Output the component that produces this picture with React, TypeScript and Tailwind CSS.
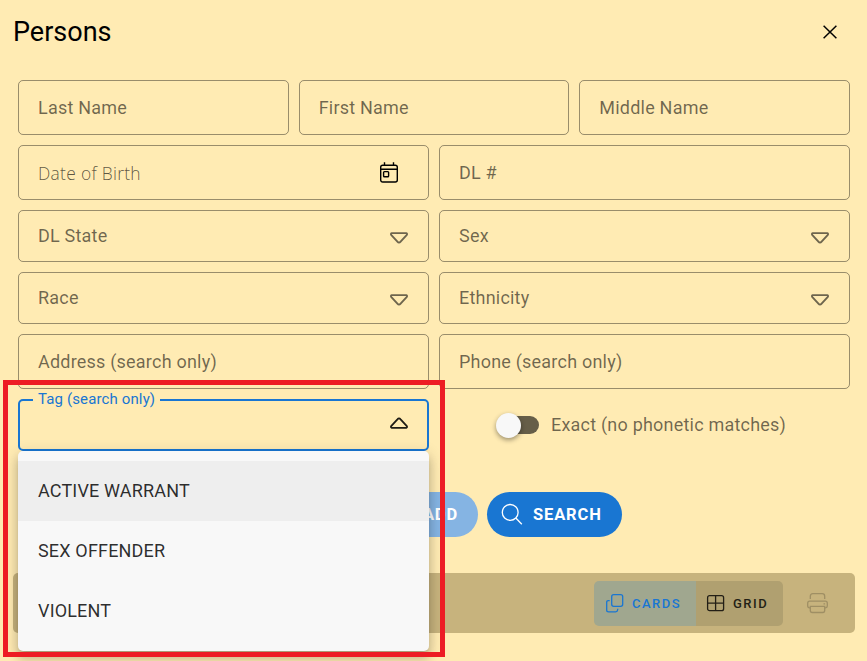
import React from "react";

const fieldBase =
  "flex items-center justify-between rounded-[5px] border border-black/40 pl-[19px] text-[18px] leading-[24px] tracking-[0.21px] text-black/57";

function TextField({ label }: { label: string }) {
  return (
    <div className={`${fieldBase} h-[55px]`}>
      <span>{label}</span>
    </div>
  );
}

function SelectField({ label }: { label: string }) {
  return (
    <div className={`${fieldBase} h-[52px] pr-5`}>
      <span>{label}</span>
      <svg width="18" height="12" viewBox="0 0 18 12" fill="none" stroke="currentColor" strokeWidth="1.9" strokeLinejoin="round" className="mt-[3px]">
        <path d="M1.8 1.1H16.2Q17.7 1.7 16.6 3.1L10.6 9.6Q9 11.6 7.4 9.6L1.4 3.1Q.3 1.7 1.8 1.1Z" />
      </svg>
    </div>
  );
}

function DateField({ label }: { label: string }) {
  return (
    <div className={`${fieldBase} h-[55px] pr-[29px]`}>
      <span className="font-['Open_Sans',sans-serif] text-[17.4px] font-[340] tracking-[0.3px] text-black/65">{label}</span>
      <svg width="20" height="22" viewBox="0 0 20 22" fill="none" stroke="#000" strokeWidth="1.4" className="mb-px">
        <rect x="1.7" y="4.2" width="16.6" height="16.8" rx="2" />
        <path d="M1.7 8.2H18.3M5.5 1.2V4.4M14.5 1.2V4.4" />
        <rect x="4.6" y="10.6" width="5" height="5.2" rx=".8" />
      </svg>
    </div>
  );
}

function TagField() {
  return (
    <div className="relative">
      <div className="relative flex h-[52px] items-center justify-end rounded-[5px] border-2 border-[#1976d2] pr-[19px]">
        <span className="absolute left-[13px] top-[-12px] bg-[#ffebb3] px-[5px] text-[15px] leading-[20px] tracking-[0.13px] text-[#1976d2]">Tag (search only)</span>
        <svg width="18" height="12" viewBox="0 0 18 12" fill="none" stroke="#1f1c15" strokeWidth="1.8" strokeLinejoin="round" className="mb-[5px]">
          <path d="M1.8 10.9H16.2Q17.7 10.3 16.6 8.9L10.6 2.4Q9 .4 7.4 2.4L1.4 8.9Q.3 10.3 1.8 10.9Z" />
        </svg>
      </div>
      <ul className="absolute left-0 top-[52px] z-10 h-[200px] w-[411px] rounded-[5px] bg-[#f8f8f8] py-[10px] text-[18px] tracking-[0.17px] text-black/83 shadow-[0_5px_5px_-3px_rgba(0,0,0,.2),0_8px_10px_1px_rgba(0,0,0,.14),0_3px_14px_2px_rgba(0,0,0,.12)]">
        <li className="flex h-[60px] items-center bg-[#eeeeee] pb-0.5 pl-5">ACTIVE WARRANT</li>
        <li className="flex h-[60px] items-center pb-0.5 pl-5">SEX OFFENDER</li>
        <li className="flex h-[60px] items-center pb-0.5 pl-5">VIOLENT</li>
      </ul>
    </div>
  );
}

function ExactSwitch() {
  return (
    <div className="flex h-[52px] items-center pl-[60px]">
      <div className="flex h-[18px] w-[40px] items-center rounded-full bg-[#665e48]">
        <div className="-ml-[3px] mt-px h-[25px] w-[25px] shrink-0 rounded-full bg-[#f8f8f8] shadow-[0_2px_5px_rgba(0,0,0,.4)]" />
      </div>
      <span className="ml-3 text-[18px] leading-[24px] tracking-[0.21px] text-black/57">Exact (no phonetic matches)</span>
    </div>
  );
}

export default function App() {
  return (
    <main className="relative h-[661px] w-[867px] overflow-hidden bg-[#ffebb3] font-[Roboto,sans-serif]">
      <header className="flex h-20 items-start justify-between pl-[13px] pr-[30px]">
        <h1 className="mt-4 text-[27px] leading-[32px] text-black">Persons</h1>
        <svg width="14" height="14" viewBox="0 0 14 14" stroke="#000" strokeWidth="1.5" className="mt-[25px]">
          <path d="M.6 .8L13.4 13.2M13.4 .8L.6 13.2" />
        </svg>
      </header>

      <section className="flex flex-col gap-[10px] pr-[17px] pl-[18px]">
        <div className="grid grid-cols-3 gap-[10px]">
          <TextField label="Last Name" />
          <TextField label="First Name" />
          <TextField label="Middle Name" />
        </div>
        <div className="grid grid-cols-2 gap-[10px]">
          <DateField label="Date of Birth" />
          <TextField label="DL #" />
          <SelectField label="DL State" />
          <SelectField label="Sex" />
          <SelectField label="Race" />
          <SelectField label="Ethnicity" />
          <TextField label="Address (search only)" />
          <TextField label="Phone (search only)" />
          <TagField />
          <ExactSwitch />
        </div>
      </section>

      <div className="mt-[41px] flex gap-[9px] pl-[371px] text-[16.5px] font-bold tracking-[0.85px] text-white">
        <button className="flex h-[45px] w-[107px] items-center justify-end rounded-full bg-[#85b4e3] pr-5">
          <span className="pt-px">ADD</span>
        </button>
        <button className="flex h-[45px] w-[135px] items-center rounded-full bg-[#1976d2] pl-[14px]">
          <svg width="22" height="22" viewBox="0 0 22 22" fill="none" stroke="#fff" strokeWidth="1.3" className="mr-[10px] mb-px">
            <circle cx="9.2" cy="9.4" r="7.9" />
            <path d="M14.8 15L20.8 21.2" />
          </svg>
          <span className="pt-px">SEARCH</span>
        </button>
      </div>

      <div className="mt-9 ml-[13px] flex h-[60px] w-[842px] items-center justify-end rounded-[5px] bg-[#c7b37d] pr-[26px]">
        <div className="mb-[-1px] flex h-[45px] overflow-hidden rounded-[5px] text-[13px] font-medium tracking-[1.5px]">
          <button className="flex w-[102px] items-center bg-[#a0a78f] pl-[11px] text-[#1976d2]">
            <svg width="20" height="20" viewBox="0 0 20 20" fill="none" stroke="currentColor" strokeWidth="1.3" className="mr-[7px] mb-px">
              <rect x="6.7" y="1.7" width="11" height="11.6" rx="2" />
              <path d="M4.7 7.7H3.2Q1.7 7.7 1.7 9.2V17.2Q1.7 18.8 3.7 18.8H10.7Q12.5 18.8 12.7 16.8V15.8" />
            </svg>
            CARDS
          </button>
          <button className="flex w-[87px] items-center bg-[#b0a070] pl-[10px] text-[#231f16]">
            <svg width="20" height="20" viewBox="0 0 20 20" fill="none" stroke="currentColor" strokeWidth="1.3" className="mr-[7px] mb-px">
              <rect x="1.6" y="2.7" width="16" height="15" rx="2" />
              <path d="M9.6 2.7V17.7M1.6 10.2H17.6" />
            </svg>
            GRID
          </button>
        </div>
        <svg width="22" height="22" viewBox="0 0 22 22" fill="none" stroke="#9f8f64" strokeWidth="1.3" className="ml-6">
          <path d="M3.3 7V4.3Q3.3 1.7 5.8 1.7H15.2Q17.7 1.7 17.7 4.3V7" />
          <path d="M3.3 15.8H2.5Q.7 15.8 .7 14V11.2Q.7 9.2 2.7 9.2H18.3Q20.3 9.2 20.3 11.2V14Q20.3 15.8 18.5 15.8H17.7M16.5 11.8H18.1" />
          <path d="M3.3 14.3H17.7V18.6Q17.7 20.5 15.8 20.5H5.2Q3.3 20.5 3.3 18.6Z" />
        </svg>
      </div>

      <div className="pointer-events-none absolute left-[3px] top-[380px] z-20 h-[277px] w-[442px] border-5 border-[#ed1c24]" />
    </main>
  );
}
